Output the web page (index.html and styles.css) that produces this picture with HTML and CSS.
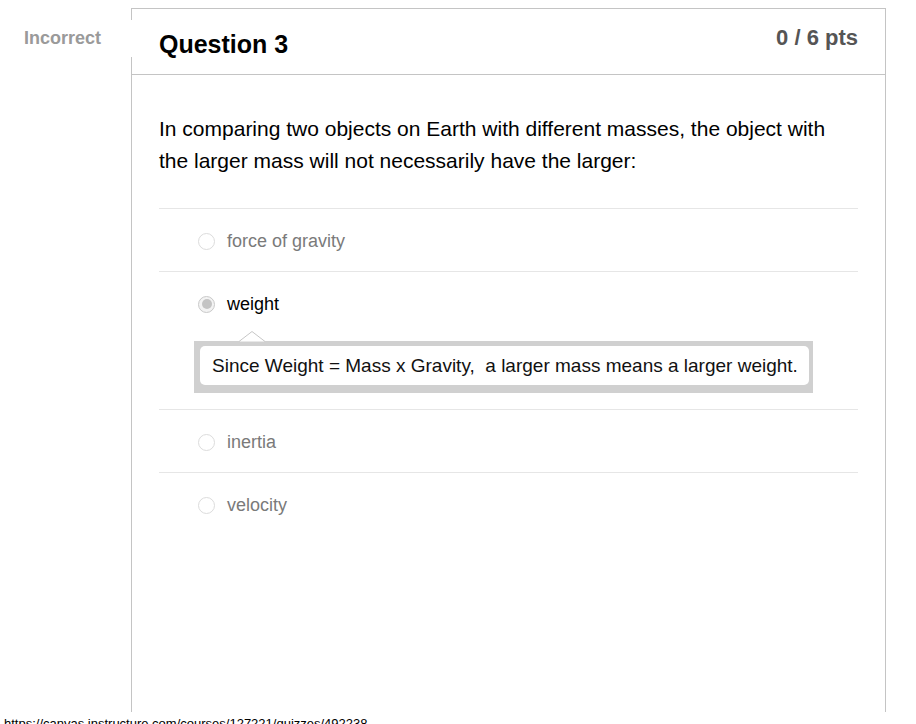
FILE: index.html
```html
<!DOCTYPE html>
<html>
<head>
<meta charset="utf-8">
<link rel="stylesheet" href="styles.css">
</head>
<body>
<div class="page">
  <div class="status">Incorrect</div>
  <div class="card">
    <div class="card-header">
      <h2 class="q-title">Question 3</h2>
      <div class="q-pts">0 / 6 pts</div>
    </div>
    <div class="card-body">
      <p class="q-text">In comparing two objects on Earth with different masses, the object with the larger mass will not necessarily have the larger:</p>
      <div class="answers">
        <div class="answer">
          <div class="row"><span class="radio"></span><span class="label">force of gravity</span></div>
        </div>
        <div class="answer selected">
          <div class="row"><span class="radio"><span class="dot"></span></span><span class="label">weight</span></div>
          <div class="comment">
            <svg class="arrow" width="26" height="11" viewBox="0 0 26 11"><polygon points="0,10.5 13,0.5 26,10.5" fill="#fff"/><polyline points="0,10.5 13,0.5 26,10.5" fill="none" stroke="#c6c6c6" stroke-width="1"/></svg>
            <div class="comment-inner">Since Weight = Mass x Gravity, &nbsp;a larger mass means a larger weight.</div>
          </div>
        </div>
        <div class="answer">
          <div class="row"><span class="radio"></span><span class="label">inertia</span></div>
        </div>
        <div class="answer">
          <div class="row"><span class="radio"></span><span class="label">velocity</span></div>
        </div>
      </div>
    </div>
  </div>
  <div class="footer">https://canvas.instructure.com/courses/127221/quizzes/492238</div>
</div>
</body>
</html>
```

FILE: styles.css
```css
html, body {
  margin: 0;
  padding: 0;
  overflow: hidden;
  background: #fff;
}
body {
  font-family: "Liberation Sans", Arial, Helvetica, sans-serif;
  color: #000;
}
.page {
  position: relative;
  padding-top: 8px;
  width: 916px;
  height: 724px;
}
.status {
  position: absolute;
  left: 0;
  top: 20px;
  width: 109px;
  height: 37px;
  padding-left: 24px;
  background: #fff;
  line-height: 37px;
  font-size: 18px;
  font-weight: bold;
  color: #9a9a9a;
  z-index: 2;
}
.card {
  margin-left: 131px;
  width: 753px;
  height: 703px;
  border: 1px solid #c4c4c4;
  border-bottom: none;
}
.card-header {
  display: flex;
  justify-content: space-between;
  align-items: flex-start;
  height: 65px;
  padding: 0 27px 0 27px;
  border-bottom: 1px solid #c4c4c4;
}
.q-title {
  margin: 21px 0 0 0;
  font-size: 25px;
  font-weight: bold;
  line-height: 29px;
}
.q-pts {
  margin-top: 16px;
  font-size: 22px;
  font-weight: bold;
  line-height: 25px;
  color: #555;
}
.card-body {
  padding: 38px 27px 0 27px;
}
.q-text {
  margin: 0;
  font-size: 21px;
  line-height: 32px;
}
.answers {
  margin-top: 31px;
}
.answer {
  border-top: 1px solid #e6e6e6;
}
.row {
  box-sizing: border-box;
  display: flex;
  align-items: center;
  height: 62px;
  padding-top: 2px;
}
.radio {
  box-sizing: border-box;
  width: 17px;
  height: 17px;
  margin-left: 39px;
  margin-right: 12px;
  border: 1px solid #dcdcdc;
  border-radius: 50%;
  background: #fff;
  display: flex;
  align-items: center;
  justify-content: center;
}
.selected .radio {
  border-color: #c9c9c9;
  background: #f3f3f3;
}
.dot {
  width: 10px;
  height: 10px;
  border-radius: 50%;
  background: #c4c4c4;
}
.label {
  font-size: 18px;
  color: #7a7a7a;
}
.selected .label {
  color: #000;
}
.selected {
  padding-bottom: 16px;
}
.comment {
  position: relative;
  margin-left: 35px;
  margin-top: 7px;
  width: 609px;
  padding: 5px 4px 8px 6px;
  background: #d0d0d0;
}
.arrow {
  position: absolute;
  left: 45px;
  top: -10px;
}
.comment-inner {
  background: #fff;
  border-radius: 5px;
  height: 39px;
  line-height: 39px;
  padding-left: 12px;
  font-size: 19px;
  color: #111;
}
.footer {
  padding: 4px 0 0 4px;
  font-size: 13px;
  line-height: 15px;
  color: #000;
  white-space: nowrap;
}
```
